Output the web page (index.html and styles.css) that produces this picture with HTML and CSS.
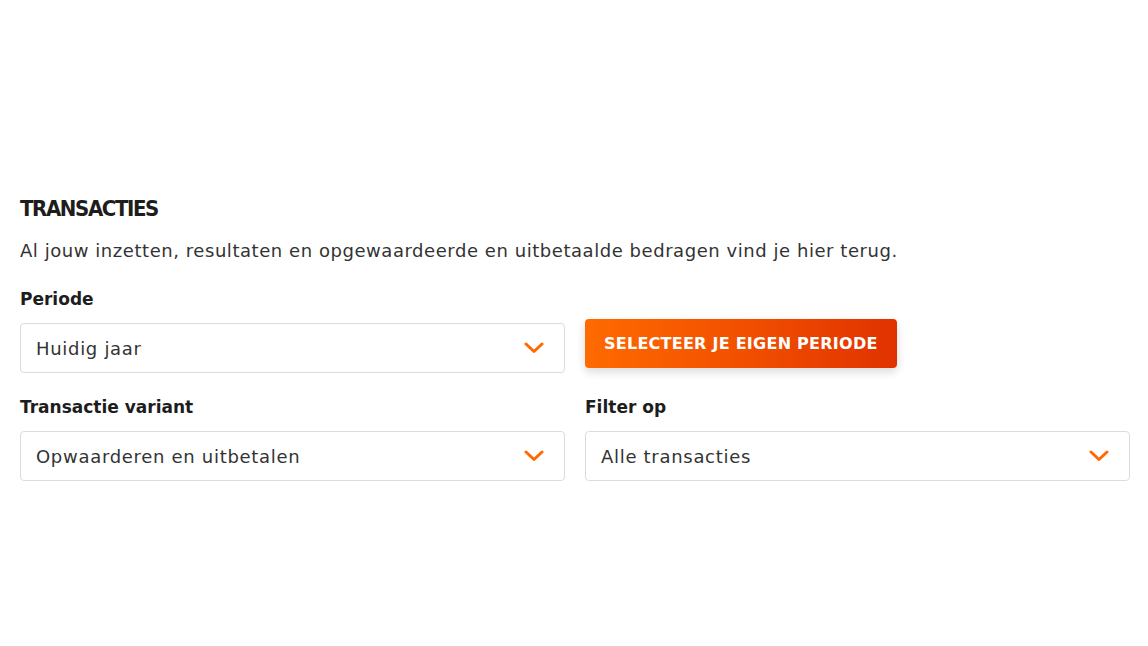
FILE: index.html
```html
<!DOCTYPE html>
<html lang="nl">
<head>
<meta charset="utf-8">
<title>Transacties</title>
<link rel="stylesheet" href="styles.css">
</head>
<body>
<section class="transactions">
  <h2 class="title">TRANSACTIES</h2>
  <p class="intro">Al jouw inzetten, resultaten en opgewaardeerde en uitbetaalde bedragen vind je hier terug.</p>
  <div class="filters">
    <div class="field">
      <label class="label">Periode</label>
      <div class="select">
        <span class="value">Huidig jaar</span>
        <svg class="chev" width="20" height="12" viewBox="0 0 20 12"><path d="M2 2 L10 9.5 L18 2" fill="none" stroke="#ff6a00" stroke-width="3" stroke-linecap="round" stroke-linejoin="round"/></svg>
      </div>
    </div>
    <div class="action">
      <button class="btn">SELECTEER JE EIGEN PERIODE</button>
    </div>
    <div class="field">
      <label class="label">Transactie variant</label>
      <div class="select">
        <span class="value">Opwaarderen en uitbetalen</span>
        <svg class="chev" width="20" height="12" viewBox="0 0 20 12"><path d="M2 2 L10 9.5 L18 2" fill="none" stroke="#ff6a00" stroke-width="3" stroke-linecap="round" stroke-linejoin="round"/></svg>
      </div>
    </div>
    <div class="field">
      <label class="label">Filter op</label>
      <div class="select">
        <span class="value">Alle transacties</span>
        <svg class="chev" width="20" height="12" viewBox="0 0 20 12"><path d="M2 2 L10 9.5 L18 2" fill="none" stroke="#ff6a00" stroke-width="3" stroke-linecap="round" stroke-linejoin="round"/></svg>
      </div>
    </div>
  </div>
</section>
</body>
</html>
```

FILE: styles.css
```css
html, body {
  margin: 0;
  background: #fff;
}
body {
  font-family: "DejaVu Sans", "Noto Sans", sans-serif;
  color: #333;
}
.transactions {
  padding: 196px 18px 0 20px;
}
.title {
  margin: 0;
  font-family: "DejaVu Sans Condensed", "DejaVu Sans", sans-serif;
  font-stretch: condensed;
  font-weight: 700;
  font-size: 22px;
  line-height: 26px;
  letter-spacing: -1.4px;
  color: #1d1d1d;
}
.intro {
  margin: 16px 0 0;
  font-size: 18px;
  line-height: 26px;
  letter-spacing: 0.55px;
  color: #333;
}
.filters {
  margin-top: 23px;
  display: grid;
  grid-template-columns: 1fr 1fr;
  column-gap: 20px;
  row-gap: 22px;
}
.field {
  display: flex;
  flex-direction: column;
}
.label {
  font-weight: 700;
  font-size: 17px;
  line-height: 24px;
  color: #1d1d1d;
  margin-bottom: 12px;
}
.select {
  height: 50px;
  box-sizing: border-box;
  border: 1px solid #dcdcdc;
  border-radius: 4px;
  display: flex;
  align-items: center;
  justify-content: space-between;
  padding: 0 20px 0 15px;
}
.value {
  font-size: 18px;
  letter-spacing: 0.7px;
  color: #333;
}
.chev {
  display: block;
}
.action {
  display: flex;
  align-items: flex-end;
  padding-bottom: 5px;
}
.btn {
  height: 49px;
  padding: 0 19px;
  border: 0;
  border-radius: 4px;
  background: linear-gradient(90deg, #ff6a00 0%, #f25000 50%, #e03200 100%);
  color: #fff;
  font-family: "DejaVu Sans", sans-serif;
  font-weight: 700;
  font-size: 16px;
  letter-spacing: 0.25px;
  box-shadow: 0 4px 10px rgba(0,0,0,0.15);
  cursor: pointer;
}
```
